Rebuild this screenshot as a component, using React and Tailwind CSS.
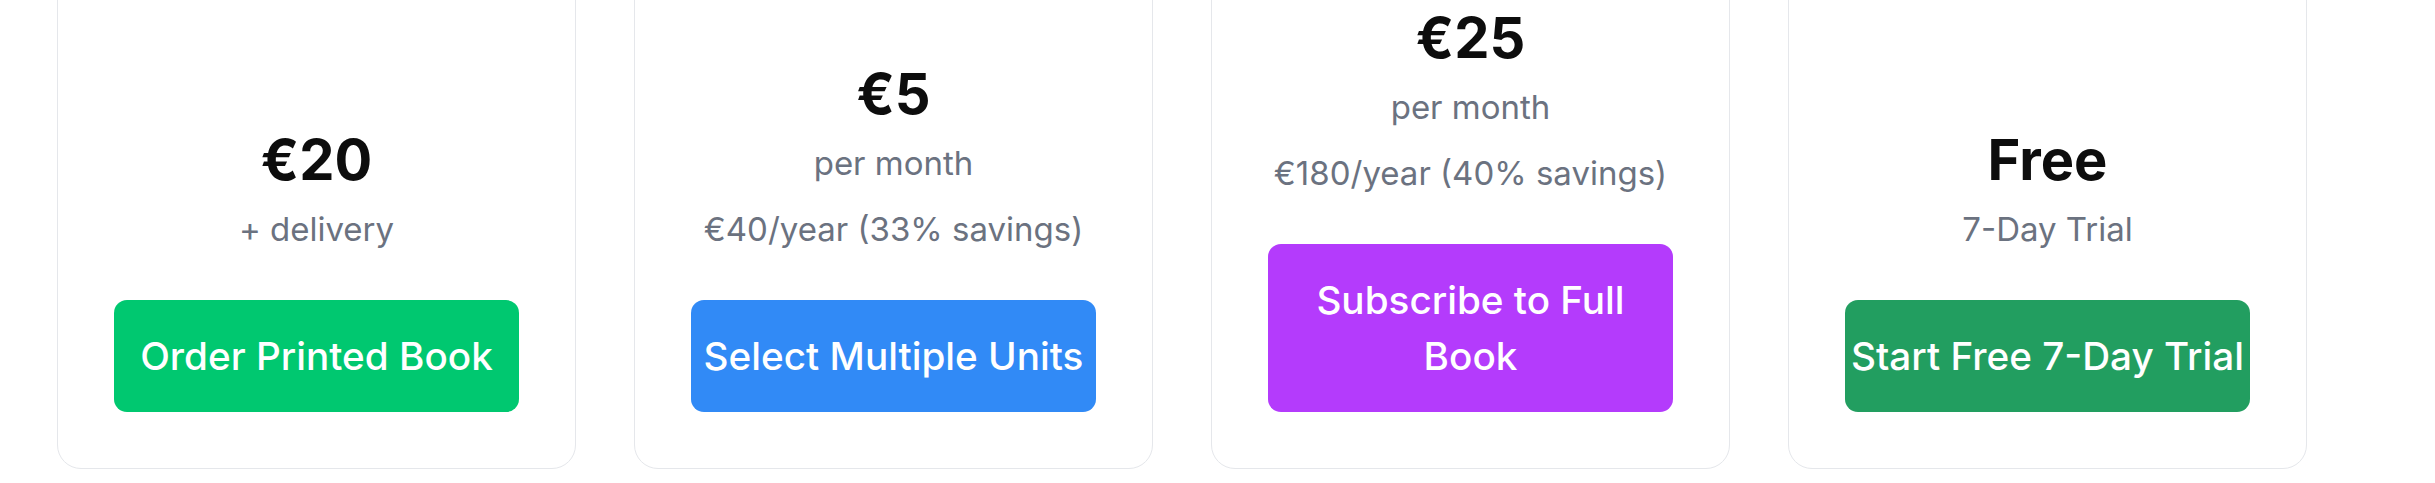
const plans = [
  {
    price: "€20",
    note: "+ delivery",
    cta: "Order Printed Book",
    btn: "bg-[#00c870] hover:bg-[#00b464] whitespace-nowrap",
  },
  {
    price: "€5",
    note: "per month",
    savings: "€40/year (33% savings)",
    cta: "Select Multiple Units",
    btn: "bg-[#318af6] hover:bg-[#2277e0] whitespace-nowrap",
  },
  {
    price: "€25",
    note: "per month",
    savings: "€180/year (40% savings)",
    cta: "Subscribe to Full Book",
    btn: "bg-[#b43bfc] hover:bg-[#a02ae6]",
  },
  {
    price: "Free",
    note: "7-Day Trial",
    cta: "Start Free 7-Day Trial",
    btn: "bg-[#229e60] hover:bg-[#1b8a52] whitespace-nowrap",
  },
];

function PlanCard({ plan }) {
  return (
    <div className="flex flex-col items-center justify-end rounded-[24px] border border-[#e5e7eb] bg-white px-[24px] pt-[56px] pb-[56px] text-center">
      <div className="text-[56px] leading-[62px] font-bold text-[#0d0d0d]">
        {plan.price}
      </div>
      <p className="mt-[17px] text-[33px] leading-[43px] text-[#6b7280]">
        {plan.note}
      </p>
      {plan.savings && (
        <p className="mt-[23px] text-[33px] leading-[43px] text-[#6b7280]">
          {plan.savings}
        </p>
      )}
      <button
        className={`mt-[49px] flex w-[405px] justify-center rounded-[13px] px-[6px] py-[28px] text-[38.7px] leading-[56px] font-medium text-white ${plan.btn}`}
      >
        {plan.cta}
      </button>
    </div>
  );
}

export default function App() {
  return (
    <div
      className="min-h-screen overflow-hidden bg-white"
      style={{ fontFamily: "Inter, 'Noto Sans', sans-serif" }}
    >
      <div className="-mt-[50px] ml-[57px] grid w-[2250px] grid-cols-4 gap-[58px]">
        {plans.map((plan) => (
          <PlanCard key={plan.cta} plan={plan} />
        ))}
      </div>
    </div>
  );
}
